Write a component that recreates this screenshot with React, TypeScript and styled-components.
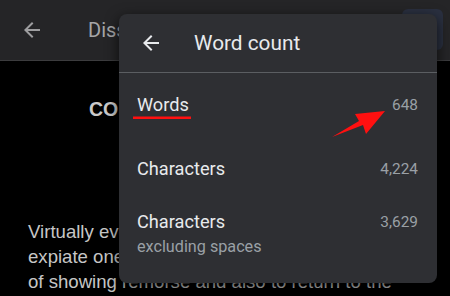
import React from "react";
import styled, { createGlobalStyle } from "styled-components";

const Global = createGlobalStyle`
  html, body { margin: 0; padding: 0; background: #000; }
  body { font-family: Roboto, "Noto Sans", sans-serif; }
`;

const Page = styled.div`
  position: relative;
  width: 450px;
  height: 296px;
  overflow: hidden;
  background: #000;
`;

const AppBar = styled.header`
  height: 60px;
  display: flex;
  align-items: center;
  padding: 0 7px 0 20px;
  background: #252527;
  border-bottom: 1px solid #3c3c3e;
`;

const BarTitle = styled.div`
  margin-left: 44px;
  font-size: 20px;
  color: #a6a6a8;
  flex: 1;
`;

const AccountButton = styled.div`
  width: 41px;
  height: 41px;
  border-radius: 6px;
  background: #2a3040;
  align-self: flex-start;
  margin-top: 9px;
`;

const Doc = styled.main`
  padding: 0 28px;
  font-family: "Liberation Sans", Arial, sans-serif;
`;

const Heading = styled.h2`
  margin: 34px 0 0 61px;
  font-size: 19.5px;
  line-height: 28px;
  font-weight: bold;
  color: #cacaca;
`;

const Paragraph = styled.p`
  margin: 96px 0 0;
  font-size: 18.6px;
  line-height: 25px;
  color: #c6c6c6;
  white-space: pre;
`;

const Dialog = styled.section`
  position: absolute;
  left: 119px;
  top: 14px;
  width: 318px;
  height: 269px;
  background: #2e2f33;
  border-radius: 8px;
  box-shadow: 0 4px 14px rgba(0, 0, 0, 0.7);
  color: #e8eaed;
  display: flex;
  flex-direction: column;
`;

const DialogHeader = styled.div`
  height: 58px;
  display: flex;
  align-items: center;
  padding-left: 20px;
  border-bottom: 1px solid #5b5e62;
`;

const DialogTitle = styled.div`
  margin-left: 31px;
  font-size: 20.8px;
  color: #e8eaed;
`;

const Row = styled.div<{ $pt: number }>`
  height: 64px;
  box-sizing: border-box;
  padding: ${(p) => p.$pt}px 19px 0 18px;
  display: flex;
  justify-content: space-between;
  align-items: flex-start;
`;

const LabelCol = styled.div`
  display: flex;
  flex-direction: column;
  gap: 3px;
`;

const Label = styled.div`
  font-size: 18.2px;
  line-height: 24px;
  color: #e8eaed;
`;

const SubLabel = styled.div`
  font-size: 16.2px;
  line-height: 19px;
  color: #9aa0a6;
`;

const Value = styled.div`
  font-size: 15.4px;
  line-height: 24px;
  color: #9aa0a6;
`;

const Annotation = styled.svg`
  position: absolute;
  left: 0;
  top: 0;
  pointer-events: none;
`;

const BackArrow = ({ color }: { color: string }) => (
  <svg width="24" height="24" viewBox="0 0 24 24">
    <path d="M20 11H7.83l5.59-5.59L12 4l-8 8 8 8 1.41-1.41L7.83 13H20v-2z" fill={color} />
  </svg>
);

export default function App() {
  return (
    <Page>
      <Global />
      <AppBar>
        <BackArrow color="#9e9ea0" />
        <BarTitle>Dissertation</BarTitle>
        <AccountButton />
      </AppBar>
      <Doc>
        <Heading>CONCLUSION</Heading>
        <Paragraph>
          {"Virtually every religion has a way to\nexpiate one's sins, as a means\nof showing remorse and also to return to the"}
        </Paragraph>
      </Doc>
      <Dialog>
        <DialogHeader>
          <BackArrow color="#e8eaed" />
          <DialogTitle>Word count</DialogTitle>
        </DialogHeader>
        <Row $pt={20}>
          <Label>Words</Label>
          <Value>648</Value>
        </Row>
        <Row $pt={20}>
          <Label>Characters</Label>
          <Value>4,224</Value>
        </Row>
        <Row $pt={9}>
          <LabelCol>
            <Label>Characters</Label>
            <SubLabel>excluding spaces</SubLabel>
          </LabelCol>
          <Value>3,629</Value>
        </Row>
      </Dialog>
      <Annotation width="450" height="296">
        <rect x="133" y="116.5" width="58" height="2.5" fill="#ff1010" />
        <polygon
          points="332,137 359,121 355,114 385,111 366,134 363,125"
          fill="#ff1010"
        />
      </Annotation>
    </Page>
  );
}
